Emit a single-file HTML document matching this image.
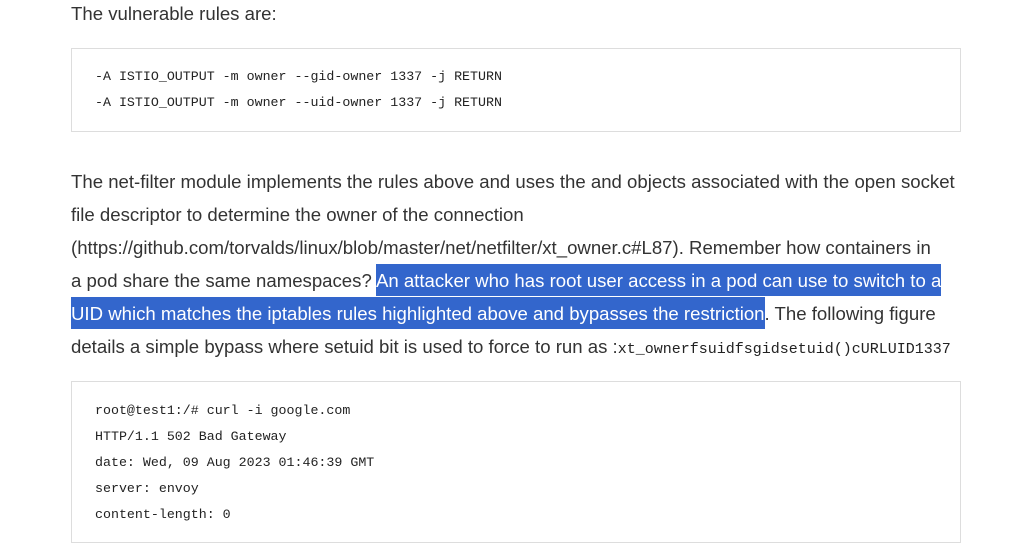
<!DOCTYPE html>
<html><head><meta charset="utf-8"><style>
body{margin:0;background:#fff;width:1018px;height:522px;overflow:hidden;font-family:"Liberation Sans",sans-serif;color:#333;}
.l{position:absolute;left:71px;white-space:nowrap;font-size:18.6px;line-height:33px;height:33px;}
.code{position:absolute;left:71px;width:888px;border:1px solid #ddd;background:#fff;}
.c{position:absolute;left:23px;font-family:"Liberation Mono",monospace;font-size:13.3px;color:#222;white-space:nowrap;}
.hl{background:#3366cc;color:#fff;padding:6px 0 5px;}
.m{font-family:"Liberation Mono",monospace;font-size:15px;color:#222;}
</style></head><body>
<div class="l" style="top:-3px">The vulnerable rules are:</div>
<div class="code" style="top:48px;height:82px">
<div class="c" style="top:20px">-A ISTIO_OUTPUT -m owner --gid-owner 1337 -j RETURN</div>
<div class="c" style="top:46px">-A ISTIO_OUTPUT -m owner --uid-owner 1337 -j RETURN</div>
</div>
<div class="l" style="top:165px">The net-filter module implements the rules above and uses the and objects associated with the open socket</div>
<div class="l" style="top:198px">file descriptor to determine the owner of the connection</div>
<div class="l" style="top:231px">(https://github.com/torvalds/linux/blob/master/net/netfilter/xt_owner.c#L87). Remember how containers in</div>
<div class="l" style="top:264px">a pod share the same namespaces? <span class="hl">An attacker who has root user access in a pod can use to switch to a</span></div>
<div class="l" style="top:297px"><span class="hl">UID which matches the iptables rules highlighted above and bypasses the restriction</span>. The following figure</div>
<div class="l" style="top:330px">details a simple bypass where setuid bit is used to force to run as :<span class="m">xt_ownerfsuidfsgidsetuid()cURLUID1337</span></div>
<div class="code" style="top:381px;height:160px">
<div class="c" style="top:21px">root@test1:/# curl -i google.com</div>
<div class="c" style="top:47px">HTTP/1.1 502 Bad Gateway</div>
<div class="c" style="top:73px">date: Wed, 09 Aug 2023 01:46:39 GMT</div>
<div class="c" style="top:99px">server: envoy</div>
<div class="c" style="top:125px">content-length: 0</div>
</div>
</body></html>
